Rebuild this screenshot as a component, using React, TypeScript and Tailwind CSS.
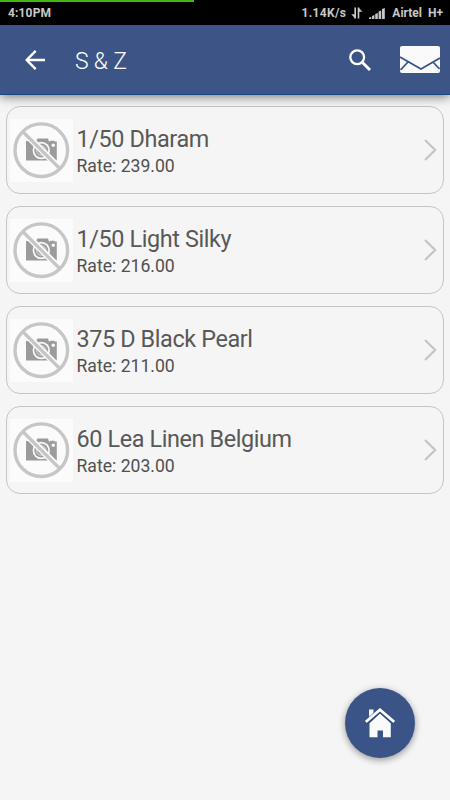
const items = [
  { name: "1/50 Dharam", rate: "239.00" },
  { name: "1/50 Light Silky", rate: "216.00" },
  { name: "375 D Black Pearl", rate: "211.00" },
  { name: "60 Lea Linen Belgium", rate: "203.00" },
];

function StatusBar() {
  return (
    <div className="h-[25px] bg-black text-[#c9c9c9]">
      <div className="h-[2px] w-[194px] bg-[#43b80c]" />
      <div className="flex h-[22px] items-center justify-between pl-[8px] pr-[7px] text-[12px] font-bold leading-none">
        <span className="tracking-[0.15px]">4:10PM</span>
        <div className="flex items-center">
          <span className="tracking-[0.35px]">1.14K/s</span>
          <svg width="12" height="12" viewBox="0 0 12 12" className="ml-[5px]">
            <path d="M4.2 0.5V11.5M7.5 11.5V0.5" stroke="currentColor" strokeWidth="1.6" fill="none" />
            <path d="M0.3 7.2H4V11.5ZM7.5 0.5V4.8H11.3Z" fill="currentColor" />
          </svg>
          <svg width="16" height="11" viewBox="0 0 16 11" className="ml-[6px]" fill="currentColor">
            <path d="M0 11V9.8L2.2 8.8V11ZM3 11V8L5.4 7V11ZM6.2 11V6L8.8 5V11ZM9.6 11V3.5L12.2 2.5V11ZM13 11V1L15.8 0V11Z" />
          </svg>
          <span className="ml-[7px]">Airtel</span>
          <span className="ml-[6px]">H+</span>
        </div>
      </div>
    </div>
  );
}

function Header() {
  return (
    <header className="relative z-10 flex h-[70px] items-center border-b border-[#184684] bg-[#3c5586] text-white shadow-[0_2px_10px_rgba(0,0,0,0.5)]">
      <svg width="20" height="20" viewBox="0 0 20 20" className="ml-[25px]" fill="none" stroke="white" strokeWidth="2.4">
        <path d="M10.7 0.8L1.7 10L10.7 19.2M1.7 10H20" />
      </svg>
      <h1 className="ml-[30px] mt-[3px] flex-1 text-[23px] font-light leading-none tracking-[-0.2px]">S &amp; Z</h1>
      <svg width="24" height="24" viewBox="0 0 24 24" className="mr-[28px]" fill="none" stroke="white">
        <circle cx="9.2" cy="9.2" r="6.9" strokeWidth="2.3" />
        <path d="M14.2 14.2L22 22" strokeWidth="3" />
      </svg>
      <svg width="40" height="27" viewBox="0 0 40 27" className="mr-[10px]">
        <rect width="40" height="27" rx="2" fill="#fafafa" />
        <path d="M0 11L21 23L40 12M0.5 24L8 16M39.5 23L33 16" fill="none" stroke="#335387" strokeWidth="1.7" />
      </svg>
    </header>
  );
}

function NoPhoto() {
  return (
    <svg width="63" height="63" viewBox="0 0 63 63" className="shrink-0 bg-[#fbfbfb]">
      <path d="M16 22H26L27.5 19.5H38L39 22.5H40V21.8H44.5V22.5H46.8V41.5H16Z" fill="#9b9b9b" />
      <circle cx="43.3" cy="26.3" r="1.7" fill="#fbfbfb" />
      <circle cx="31.3" cy="31.5" r="8.7" fill="#fbfbfb" />
      <circle cx="31.3" cy="31.5" r="7" fill="#a0a0a0" />
      <circle cx="31.3" cy="31.5" r="4.7" fill="none" stroke="#dedede" strokeWidth="1" />
      <path d="M14 13.5L50 49.5" stroke="#fbfbfb" strokeWidth="6.4" />
      <path d="M12.7 12.5L50.2 50" stroke="#c6c6c6" strokeWidth="3.2" />
      <circle cx="31.3" cy="31.2" r="26.3" fill="none" stroke="#c6c6c6" strokeWidth="3.4" />
    </svg>
  );
}

function ItemCard({ item }: { item: (typeof items)[number] }) {
  return (
    <li className="flex h-[88px] items-center rounded-[14px] border border-[#c5c5c5] pl-[3px] pr-[6px]">
      <NoPhoto />
      <div className="ml-[3.5px] mt-[2px] flex-1">
        <p className="text-[23.4px] font-normal leading-[30px] tracking-[-0.38px] text-[#585858]">{item.name}</p>
        <p className="text-[17.6px] font-normal leading-[24px] text-[#505050]">Rate: {item.rate}</p>
      </div>
      <svg width="13" height="22" viewBox="0 0 13 22" fill="none" stroke="#c3c3c3" strokeWidth="2.1">
        <path d="M1 1L11.2 11L1 21" />
      </svg>
    </li>
  );
}

export default function App() {
  return (
    <main className="relative h-[800px] w-[450px] overflow-hidden bg-[#f5f5f5] font-['Roboto',sans-serif]">
      <StatusBar />
      <Header />
      <ul className="flex flex-col gap-[12px] pl-[6px] pr-[6px] pt-[11px]">
        {items.map((item) => (
          <ItemCard key={item.name} item={item} />
        ))}
      </ul>
      <button
        aria-label="Home"
        className="absolute bottom-[42px] right-[35px] flex h-[70px] w-[70px] items-center justify-center rounded-full bg-[#3a5487] shadow-[0_2px_7px_rgba(0,0,0,0.4)]"
      >
        <svg width="30" height="30" viewBox="0 0 30 30">
          <path d="M4 1.5H8.5V9H4Z" fill="#fafafa" />
          <path d="M4.5 15.3L15 5.5L25.8 15.3V29.3H18V22.5H12.5V29.3H4.5Z" fill="#fafafa" />
          <path d="M0.8 14.8L15 2L29.2 14.8" fill="none" stroke="#294b82" strokeWidth="4.6" />
          <path d="M0.8 14L15 1.7L29.2 14" fill="none" stroke="#fafafa" strokeWidth="2.8" />
        </svg>
      </button>
    </main>
  );
}
